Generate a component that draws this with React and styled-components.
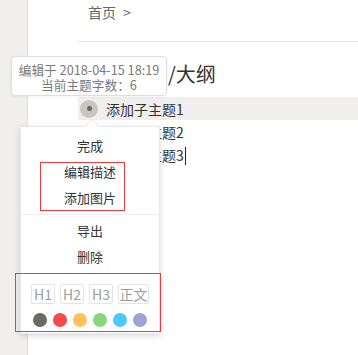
import React from "react";
import styled, { createGlobalStyle } from "styled-components";

const GlobalStyle = createGlobalStyle`
  html, body {
    margin: 0;
    padding: 0;
    background: #fff;
  }
  body {
    font-family: "Noto Sans CJK SC", "Noto Sans", sans-serif;
    color: #333;
  }
`;

const Page = styled.div`
  display: flex;
  width: 358px;
  height: 355px;
  overflow: hidden;
`;

const Sidebar = styled.aside`
  width: 27px;
  flex-shrink: 0;
  background: #f0efed;
  border-right: 1px solid #e2e0dc;
`;

const Main = styled.main`
  flex: 1;
  padding-left: 50px;
`;

const Breadcrumb = styled.div`
  height: 42px;
  padding: 2px 0 0 10px;
  display: flex;
  align-items: flex-start;
  gap: 7px;
  font-size: 14px;
  line-height: 20px;
  color: #666;
  border-bottom: 1px solid #e6e6e6;
  box-sizing: border-box;
`;

const Title = styled.h1`
  margin: 0;
  padding: 18px 0 9px 10px;
  font-size: 20px;
  line-height: 28px;
  font-weight: 400;
  color: #333;
`;

const Row = styled.div`
  display: flex;
  align-items: center;
  height: 23px;
  padding-left: 2px;
  background: ${(p) => (p.$active ? "#f0efed" : "transparent")};
`;

const BulletWrap = styled.div`
  position: relative;
  width: 18px;
  height: 18px;
  margin-right: 8px;
  z-index: ${(p) => (p.$open ? 5 : "auto")};
`;

const Bullet = styled.span`
  display: flex;
  align-items: center;
  justify-content: center;
  width: 18px;
  height: 18px;
  border-radius: 50%;
  background: ${(p) => (p.$open ? "#c9c6c1" : "transparent")};
  &::after {
    content: "";
    width: 5px;
    height: 5px;
    border-radius: 50%;
    background: #666;
  }
`;

const RowText = styled.span`
  font-size: 14px;
  line-height: 20px;
  color: #333;
`;

const Caret = styled.span`
  display: inline-block;
  width: 1px;
  height: 18px;
  margin-left: 1px;
  vertical-align: -4px;
  background: #222;
`;

const Tooltip = styled.div`
  position: absolute;
  bottom: calc(100% + 4px);
  left: 50%;
  transform: translateX(-50%);
  width: 156px;
  height: 40px;
  box-sizing: border-box;
  padding-top: 5px;
  background: #fff;
  border: 1px solid #dedede;
  border-radius: 4px;
  box-shadow: 0 1px 3px rgba(0, 0, 0, 0.06);
  text-align: center;
  font-size: 12.7px;
  line-height: 15px;
  color: #7a7a7a;
  white-space: nowrap;
`;

const Menu = styled.div`
  position: absolute;
  top: calc(100% + 8px);
  left: -60px;
  width: 140px;
  padding-top: 6px;
  background: #fff;
  border: 1px solid #e8e8e8;
  box-sizing: border-box;
  box-shadow: 0 2px 6px rgba(0, 0, 0, 0.15);

  &::before {
    content: "";
    position: absolute;
    top: -8px;
    left: 63px;
    border-left: 8px solid transparent;
    border-right: 8px solid transparent;
    border-bottom: 8px solid #e4e4e4;
  }
  &::after {
    content: "";
    position: absolute;
    top: -7px;
    left: 64px;
    border-left: 7px solid transparent;
    border-right: 7px solid transparent;
    border-bottom: 7px solid #fff;
  }
`;

const MenuItem = styled.div`
  height: 26px;
  display: flex;
  align-items: center;
  justify-content: center;
  font-size: 13px;
  color: #333;
  white-space: nowrap;
`;

const Group = styled.div`
  position: relative;
`;

const Annotation = styled.div`
  position: absolute;
  top: ${(p) => p.$top}px;
  bottom: ${(p) => p.$bottom}px;
  left: ${(p) => p.$left}px;
  right: ${(p) => p.$right}px;
  border: 1px solid #f03a3a;
  pointer-events: none;
`;

const Divider = styled.div`
  height: 1px;
  margin: 3px 0 3px;
  background: #ececec;
`;

const StyleSection = styled.div`
  position: relative;
  padding: 14px 0 6px;
  display: flex;
  flex-direction: column;
  align-items: center;
  gap: 9px;
`;

const HeadingRow = styled.div`
  display: flex;
  gap: 5px;
`;

const HeadingBtn = styled.span`
  width: ${(p) => (p.$wide ? 31 : 24)}px;
  height: 20px;
  box-sizing: border-box;
  display: flex;
  align-items: center;
  justify-content: center;
  border: 1px solid #e4e4e4;
  border-radius: 2px;
  font-size: 14px;
  color: #9d9d9d;
  white-space: nowrap;
`;

const DotRow = styled.div`
  display: flex;
  gap: 6px;
`;

const Dot = styled.span`
  width: 14px;
  height: 14px;
  border-radius: 50%;
  background: ${(p) => p.$color};
`;

const colors = ["#6b6a66", "#f44a4a", "#ffc15e", "#86d97b", "#4ec8fa", "#9ea2d7"];

export default function App() {
  return (
    <>
      <GlobalStyle />
      <Page>
        <Sidebar />
        <Main>
          <Breadcrumb>
            <span>首页</span>
            <span>&gt;</span>
          </Breadcrumb>
          <Title>我的文档/大纲</Title>
          <Row $active>
            <BulletWrap $open>
              <Bullet $open />
              <Tooltip>
                <div>编辑于 2018-04-15 18:19</div>
                <div>当前主题字数：6</div>
              </Tooltip>
              <Menu>
                <MenuItem>完成</MenuItem>
                <Group>
                  <MenuItem>编辑描述</MenuItem>
                  <MenuItem>添加图片</MenuItem>
                  <Annotation $top={3} $bottom={0} $left={19} $right={34} />
                </Group>
                <Divider />
                <MenuItem>导出</MenuItem>
                <MenuItem>删除</MenuItem>
                <StyleSection>
                  <HeadingRow>
                    <HeadingBtn>H1</HeadingBtn>
                    <HeadingBtn>H2</HeadingBtn>
                    <HeadingBtn>H3</HeadingBtn>
                    <HeadingBtn $wide>正文</HeadingBtn>
                  </HeadingRow>
                  <DotRow>
                    {colors.map((c) => (
                      <Dot key={c} $color={c} />
                    ))}
                  </DotRow>
                  <Annotation $top={3} $bottom={1} $left={-6} $right={-2} />
                </StyleSection>
              </Menu>
            </BulletWrap>
            <RowText>添加子主题1</RowText>
          </Row>
          <Row>
            <BulletWrap>
              <Bullet />
            </BulletWrap>
            <RowText>添加子主题2</RowText>
          </Row>
          <Row>
            <BulletWrap>
              <Bullet />
            </BulletWrap>
            <RowText>
              添加子主题3
              <Caret />
            </RowText>
          </Row>
        </Main>
      </Page>
    </>
  );
}
